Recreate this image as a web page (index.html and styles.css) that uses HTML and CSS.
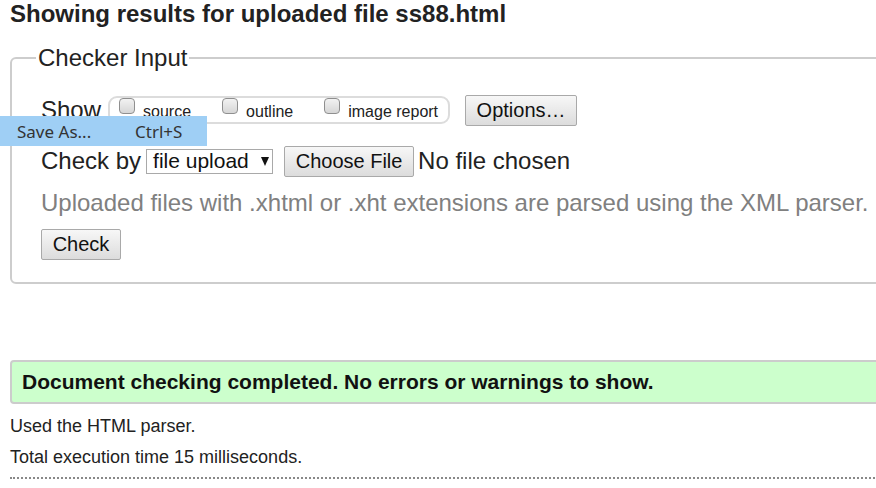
FILE: index.html
```html
<!DOCTYPE html>
<html>
<head>
<meta charset="utf-8">
<link rel="stylesheet" href="styles.css">
</head>
<body>
<h1 class="title">Showing results for uploaded file ss88.html</h1>
<fieldset class="checker">
  <legend class="legend">Checker Input</legend>
  <div class="row row-show">
    <span class="label">Show</span>
    <span class="group">
      <span class="opt"><span class="cb"></span><span class="opt-text">source</span></span>
      <span class="opt"><span class="cb"></span><span class="opt-text">outline</span></span>
      <span class="opt"><span class="cb"></span><span class="opt-text">image report</span></span>
    </span>
    <button class="btn btn-options">Options…</button>
  </div>
  <div class="row row-check">
    <span class="label">Check by</span>
    <span class="select"><span>file upload</span><span class="arrow"></span></span>
    <button class="btn btn-file">Choose File</button>
    <span class="nofile">No file chosen</span>
  </div>
  <p class="hint">Uploaded files with .xhtml or .xht extensions are parsed using the XML parser.</p>
  <button class="btn btn-check">Check</button>
</fieldset>
<div class="success">Document checking completed. No errors or warnings to show.</div>
<p class="info">Used the HTML parser.</p>
<p class="info">Total execution time 15 milliseconds.</p>
<div class="dotted"></div>
<div class="menu"><span class="menu-item">Save As...</span><span class="menu-key">Ctrl+S</span></div>
</body>
</html>
```
FILE: styles.css
```css
html { overflow: hidden; }
body {
  margin: 0;
  padding: 0 0 0 10px;
  font-family: "Liberation Sans", Arial, sans-serif;
  color: #111;
  background: #fff;
  width: 900px;
}
.title {
  margin: 0;
  font-size: 24px;
  line-height: 28px;
  font-weight: bold;
  color: #222;
}
.checker {
  margin: 16px 0 0 0;
  padding: 22px 0 22px 29px;
  border: 2px solid #cdcdcd;
  border-radius: 6px;
  width: 900px;
}
.legend {
  font-size: 24px;
  padding: 0 2px;
  margin-left: -5px;
  color: #222;
  line-height: 28px;
}
.row {
  display: flex;
  align-items: center;
  font-size: 24px;
  height: 32px;
}
.label { color: #222; }
.group {
  display: inline-flex;
  align-items: flex-start;
  margin-left: 7px;
  height: 24px;
  border: 2px solid #dcdcdc;
  border-radius: 9px;
  padding: 0 10px 0 9px;
}
.opt {
  display: inline-flex;
  align-items: flex-start;
  margin-right: 31px;
}
.opt:last-child { margin-right: 0; }
.cb {
  width: 14px;
  height: 14px;
  border: 1px solid #8f8f8f;
  border-radius: 4px;
  background: linear-gradient(#f2f2f2, #d6d6d6);
}
.opt-text {
  font-size: 16px;
  margin-left: 8px;
  margin-top: 5px;
  line-height: 18px;
  color: #222;
}
.btn {
  font-family: "Liberation Sans", Arial, sans-serif;
  font-size: 20px;
  color: #111;
  height: 31px;
  border: 1px solid #a9a9a9;
  border-radius: 2px;
  background: linear-gradient(#f7f7f7, #dcdcdc);
  padding: 0;
  line-height: 29px;
  white-space: nowrap;
  text-align: center;
}
.btn-options { margin-left: 15px; width: 112px; }
.row-check { margin-top: 19px; }
.select {
  display: inline-flex;
  align-items: center;
  margin-left: 5px;
  height: 25px;
  width: 127px;
  box-sizing: border-box;
  border: 1px solid #a9a9a9;
  padding: 0 0 0 6px;
  font-size: 21px;
  color: #111;
}
.arrow {
  width: 0;
  height: 0;
  border-left: 4px solid transparent;
  border-right: 4px solid transparent;
  border-top: 9px solid #111;
  margin-left: 12px;
}
.btn-file { margin-left: 11px; width: 130px; }
.nofile { margin-left: 4px; color: #222; }
.hint {
  margin: 12px 0 0 0;
  font-size: 24px;
  line-height: 28px;
  color: #808080;
  white-space: nowrap;
}
.btn-check { margin-top: 12px; width: 80px; display: block; }
.success {
  margin-top: 76px;
  height: 40px;
  border: 2px solid #cccccc;
  border-radius: 4px;
  background: #ccffcc;
  width: 900px;
  padding-left: 10px;
  font-weight: bold;
  font-size: 21px;
  line-height: 40px;
  color: #111;
}
.info {
  margin: 12px 0 0 0;
  font-size: 18px;
  line-height: 20px;
  color: #222;
}
.info + .info { margin-top: 11px; }
.dotted {
  margin-top: 10px;
  border-top: 2px dotted #888;
  width: 900px;
}
.menu {
  position: absolute;
  left: 0;
  top: 116px;
  width: 207px;
  height: 30px;
  background: #9fcff5;
  font-family: "Noto Sans", "Open Sans", sans-serif;
  font-size: 17px;
  color: #333;
  display: flex;
  align-items: center;
}
.menu-item { margin-left: 17px; width: 118px; }
```
